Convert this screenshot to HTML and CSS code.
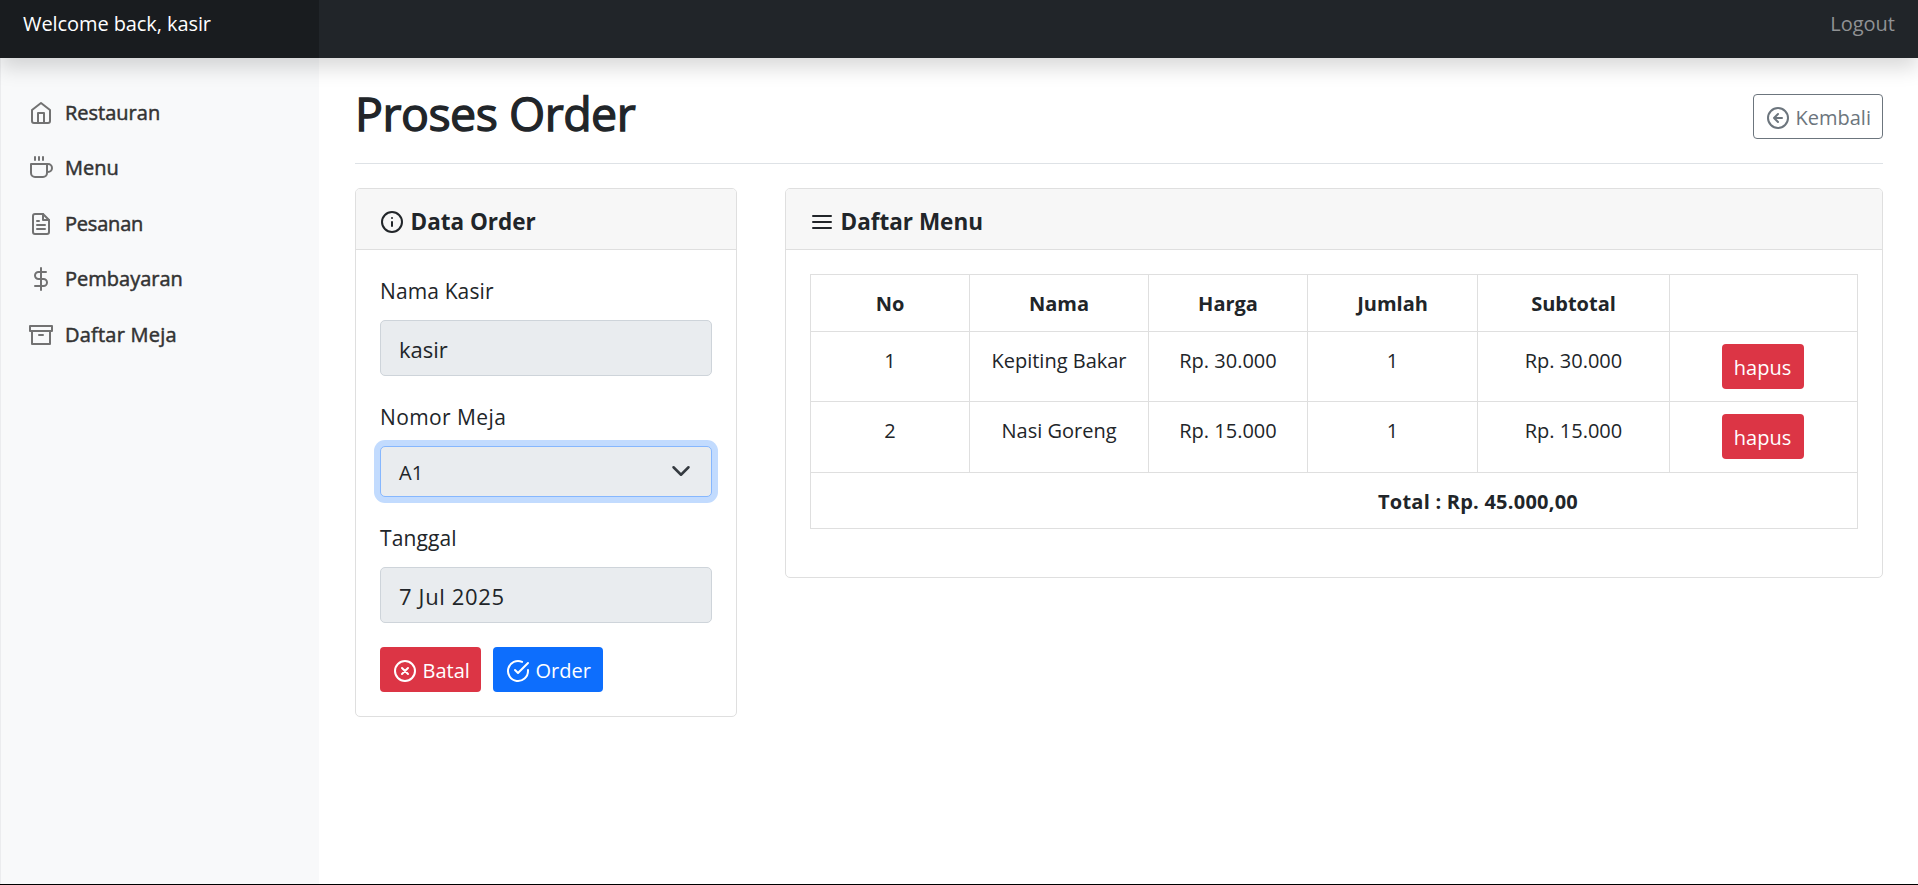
FILE: index.html
```html
<!DOCTYPE html>
<html lang="id">
<head>
<meta charset="utf-8">
<title>Proses Order</title>
<link rel="stylesheet" href="styles.css">
</head>
<body>
<header class="topbar">
  <div class="brand">Welcome back, kasir</div>
  <a class="logout">Logout</a>
</header>
<div class="layout">
  <nav class="sidebar">
    <a class="nav-link"><svg class="icon" viewBox="0 0 24 24"><path d="M3 9l9-7 9 7v11a2 2 0 0 1-2 2H5a2 2 0 0 1-2-2z"/><path d="M9 22V12h6v10"/></svg><span>Restauran</span></a>
    <a class="nav-link"><svg class="icon" viewBox="0 0 24 24"><path d="M18 8h1a4 4 0 0 1 0 8h-1"/><path d="M2 8h16v9a4 4 0 0 1-4 4H6a4 4 0 0 1-4-4V8z"/><path d="M6 1v3M10 1v3M14 1v3"/></svg><span>Menu</span></a>
    <a class="nav-link nav-orders"><svg class="icon" viewBox="0 0 24 24"><path d="M14 2H6a2 2 0 0 0-2 2v16a2 2 0 0 0 2 2h12a2 2 0 0 0 2-2V8z"/><path d="M14 2v6h6M16 13H8M16 17H8M10 9H8"/></svg><span>Pesanan</span></a>
    <a class="nav-link"><svg class="icon" viewBox="0 0 24 24"><path d="M12 1v22"/><path d="M17 5H9.5a3.5 3.5 0 0 0 0 7h5a3.5 3.5 0 0 1 0 7H6"/></svg><span>Pembayaran</span></a>
    <a class="nav-link nav-tables"><svg class="icon" viewBox="0 0 24 24"><path d="M21 8v13H3V8"/><path d="M1 3h22v5H1zM10 12h4"/></svg><span>Daftar Meja</span></a>
  </nav>
  <main class="main">
    <div class="page-head">
      <h1 class="title">Proses Order</h1>
      <a class="btn btn-outline"><svg class="icon" viewBox="0 0 24 24"><circle cx="12" cy="12" r="10"/><path d="M12 8l-4 4 4 4M16 12H8"/></svg><span>Kembali</span></a>
    </div>
    <div class="cards">
      <section class="card card-order">
        <h2 class="card-head"><svg class="icon" viewBox="0 0 24 24"><circle cx="12" cy="12" r="10"/><path d="M12 16v-4M12 8h.01"/></svg><span>Data Order</span></h2>
        <div class="form">
          <label class="label">Nama Kasir</label>
          <div class="field">kasir</div>
          <label class="label label-next label-table">Nomor Meja</label>
          <div class="field select"><span>A1</span><svg class="chevron" viewBox="0 0 16 16"><path d="M2 5l6 6 6-6"/></svg></div>
          <label class="label label-next">Tanggal</label>
          <div class="field field-date">7 Jul 2025</div>
          <div class="actions">
            <a class="btn btn-danger btn-batal"><svg class="icon" viewBox="0 0 24 24"><circle cx="12" cy="12" r="10"/><path d="M15 9l-6 6M9 9l6 6"/></svg><span>Batal</span></a>
            <a class="btn btn-primary"><svg class="icon" viewBox="0 0 24 24"><path d="M22 11.08V12a10 10 0 1 1-5.93-9.14"/><path d="M22 4L12 14.01l-3-3"/></svg><span>Order</span></a>
          </div>
        </div>
      </section>
      <section class="card card-menu">
        <h2 class="card-head"><svg class="icon" viewBox="0 0 24 24"><path d="M3 12h18M3 6h18M3 18h18"/></svg><span>Daftar Menu</span></h2>
        <table class="table">
          <colgroup><col class="c-no"><col class="c-nama"><col class="c-harga"><col class="c-jumlah"><col class="c-sub"><col class="c-aksi"></colgroup>
          <thead><tr><th>No</th><th>Nama</th><th>Harga</th><th>Jumlah</th><th>Subtotal</th><th></th></tr></thead>
          <tbody>
            <tr class="r1"><td>1</td><td>Kepiting Bakar</td><td>Rp. 30.000</td><td>1</td><td>Rp. 30.000</td><td class="aksi"><a class="btn btn-danger btn-hapus">hapus</a></td></tr>
            <tr class="r2"><td>2</td><td>Nasi Goreng</td><td>Rp. 15.000</td><td>1</td><td>Rp. 15.000</td><td class="aksi"><a class="btn btn-danger btn-hapus">hapus</a></td></tr>
            <tr class="total"><td colspan="6">Total : Rp. 45.000,00</td></tr>
          </tbody>
        </table>
      </section>
    </div>
  </main>
</div>
</body>
</html>
```
FILE: styles.css
```css
* { box-sizing: border-box; }
body { margin: 0; height: 885px; overflow: hidden; background: #fff; color: #212529; font: 20px/30px "Open Sans", "Noto Sans", sans-serif; border-bottom: 1px solid #000; }
.topbar { position: relative; z-index: 2; display: flex; justify-content: space-between; height: 58px; background: #212529; box-shadow: 0 10px 20px rgba(0,0,0,.15); }
.brand { width: 319px; padding: 9px 0 0 23px; background: #191c1f; color: #fff; letter-spacing: -.08px; }
.logout { padding: 9px 23px 0 0; color: #909294; }
.layout { display: flex; height: 826px; }
.sidebar { width: 319px; padding-top: 27px; background: #f8f9fa; border-left: 1px solid #ebecee; }
.nav-link { display: flex; align-items: center; gap: 12px; height: 55.5px; padding-left: 28px; color: #333; -webkit-text-stroke: .5px #333; }
.nav-orders { letter-spacing: -.2px; }
.nav-tables { letter-spacing: .22px; }
.nav-link .icon { color: #727272; }
.icon { flex: none; width: 24px; height: 24px; fill: none; stroke: currentColor; stroke-width: 2; stroke-linecap: round; stroke-linejoin: round; }
.main { width: 1599px; padding: 0 35px 0 36px; }
.page-head { display: flex; justify-content: space-between; align-items: flex-start; height: 106px; border-bottom: 1px solid #dee2e6; }
.title { margin: 25px 0 0; font-size: 46.5px; line-height: 60px; font-weight: 400; letter-spacing: -.5px; -webkit-text-stroke: 1.3px #212529; }
.btn { display: flex; align-items: center; height: 45px; padding: 2px 0 0 14px; border-radius: 4px; color: #fff; white-space: nowrap; }
.btn .icon { margin: 0 5.5px 0 -1px; }
.btn-outline { width: 130px; margin-top: 36px; border: 1px solid #6c757d; color: #6c757d; padding-left: 13px; }
.btn-danger { background: #dc3545; }
.btn-primary { width: 110px; background: #0d6efd; }
.btn-batal { width: 101px; }
.btn-hapus { width: 82px; margin: 0 auto; padding: 2px 0 0; justify-content: center; }
.cards { display: flex; gap: 48px; align-items: flex-start; padding-top: 24px; }
.card { border: 1px solid #dfdfdf; border-radius: 5px; }
.card-order { width: 382px; height: 529px; }
.card-menu { width: 1098px; height: 390px; }
.card-head { display: flex; align-items: center; gap: 6.5px; height: 61px; margin: 0; padding: 5px 0 0 24px; background: #f7f7f7; border-bottom: 1px solid #dfdfdf; border-radius: 4px 4px 0 0; font-size: 22.5px; font-weight: 700; }
.form { padding: 26px 24px 0; }
.label { display: block; height: 44px; font-size: 21px; letter-spacing: .12px; }
.label-next { margin-top: 26px; }
.label-table { letter-spacing: .4px; }
.field { display: flex; align-items: center; height: 56px; padding: 2px 20px 0 18px; background: #e9ecef; border: 1px solid #ced4da; border-radius: 5px; font-size: 22px; }
.field-date { letter-spacing: .65px; }
.select { justify-content: space-between; height: 51px; font-size: 20px; border-color: #86b7fe; box-shadow: 0 0 0 6px #c2dbfe; }
.chevron { width: 20px; height: 20px; margin-top: -3px; fill: none; stroke: #343a40; stroke-width: 2; stroke-linecap: round; stroke-linejoin: round; }
.actions { display: flex; gap: 12px; margin-top: 24px; }
.table { width: 1047px; margin: 24px 0 0 24px; border-collapse: collapse; table-layout: fixed; text-align: center; }
.table th, .table td { padding: 0; border: 1px solid #dfdfdf; height: 57px; }
.table th { padding-top: 1px; font-weight: 700; }
.table td { vertical-align: top; padding-top: 13.5px; }
.table .aksi { padding-top: 12px; padding-right: 2px; }
.table .r1 td { height: 70px; }
.table .r2 td { height: 71px; }
.table .total td { height: 56px; padding-left: 288px; font-weight: 700; letter-spacing: .23px; }
.c-no { width: 159px; }
.c-nama { width: 179px; }
.c-harga { width: 159px; }
.c-jumlah { width: 170px; }
.c-sub { width: 192px; }
.c-aksi { width: 188px; }
```
